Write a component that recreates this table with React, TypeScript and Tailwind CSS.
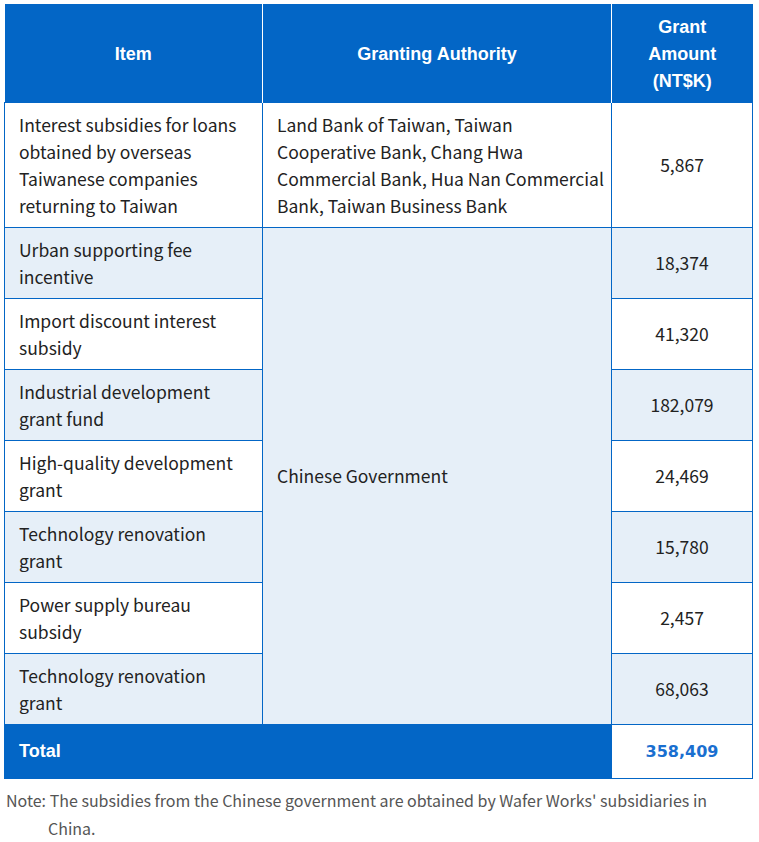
const rows = [
  { item: "Urban supporting fee incentive", amount: "18,374" },
  { item: "Import discount interest subsidy", amount: "41,320" },
  { item: "Industrial development grant fund", amount: "182,079" },
  { item: "High-quality development grant", amount: "24,469" },
  { item: "Technology renovation grant", amount: "15,780" },
  { item: "Power supply bureau subsidy", amount: "2,457" },
  { item: "Technology renovation grant", amount: "68,063" },
];

const body = { fontFamily: '"Noto Sans CJK TC", "Noto Sans", sans-serif' };
const head = { fontFamily: '"Liberation Sans", Arial, sans-serif' };

export default function App() {
  return (
    <div className="min-h-screen bg-white pt-[4px] pl-[4px]" style={body}>
      <table className="w-[748px] table-fixed border-collapse text-[17.5px] leading-[27px] text-[#222]">
        <colgroup>
          <col className="w-[258px]" />
          <col className="w-[349px]" />
          <col className="w-[141px]" />
        </colgroup>
        <thead>
          <tr className="h-[98px] bg-[#0366c6] text-white font-bold text-[18px]" style={head}>
            <th className="border-r border-white text-center align-middle px-[14px] pt-[3px]">Item</th>
            <th className="border-r border-white text-center align-middle px-[14px] pt-[3px]">Granting Authority</th>
            <th className="text-center align-middle px-[14px] pt-[3px]">
              Grant
              <br />
              Amount
              <br />
              (NT$K)
            </th>
          </tr>
        </thead>
        <tbody>
          <tr className="bg-white">
            <td className="border border-[#0366c6] px-[14px] py-[8px] align-middle">
              Interest subsidies for loans obtained by overseas Taiwanese companies returning to Taiwan
            </td>
            <td className="border border-[#0366c6] pl-[14px] pr-[6px] py-[8px] align-middle">
              Land Bank of Taiwan, Taiwan Cooperative Bank, Chang Hwa Commercial Bank, Hua Nan Commercial Bank, Taiwan Business Bank
            </td>
            <td className="border border-[#0366c6] px-[14px] py-[8px] text-center align-middle">5,867</td>
          </tr>
          {rows.map((r, i) => (
            <tr key={i} className={i % 2 === 0 ? "bg-[#e6eff8]" : "bg-white"}>
              <td className="border border-[#0366c6] px-[14px] py-[8px] align-middle">{r.item}</td>
              {i === 0 && (
                <td rowSpan={7} className="border border-[#0366c6] bg-[#e6eff8] px-[14px] align-middle">
                  Chinese Government
                </td>
              )}
              <td className="border border-[#0366c6] px-[14px] py-[8px] text-center align-middle">{r.amount}</td>
            </tr>
          ))}
          <tr className="h-[54px]">
            <td colSpan={2} className="bg-[#0366c6] border border-[#0366c6] px-[14px] text-white font-bold text-[18px]" style={head}>
              Total
            </td>
            <td className="bg-white border border-[#0366c6] text-center text-[#1a6fd0] font-bold text-[16px]" style={{ fontFamily: '"DejaVu Sans", Verdana, sans-serif' }}>
              358,409
            </td>
          </tr>
        </tbody>
      </table>
      <p className="mt-[7px] pl-[44px] -indent-[42px] text-[16px] leading-[28px] text-[#555] w-[748px]">
        Note: The subsidies from the Chinese government are obtained by Wafer Works' subsidiaries in China.
      </p>
    </div>
  );
}
